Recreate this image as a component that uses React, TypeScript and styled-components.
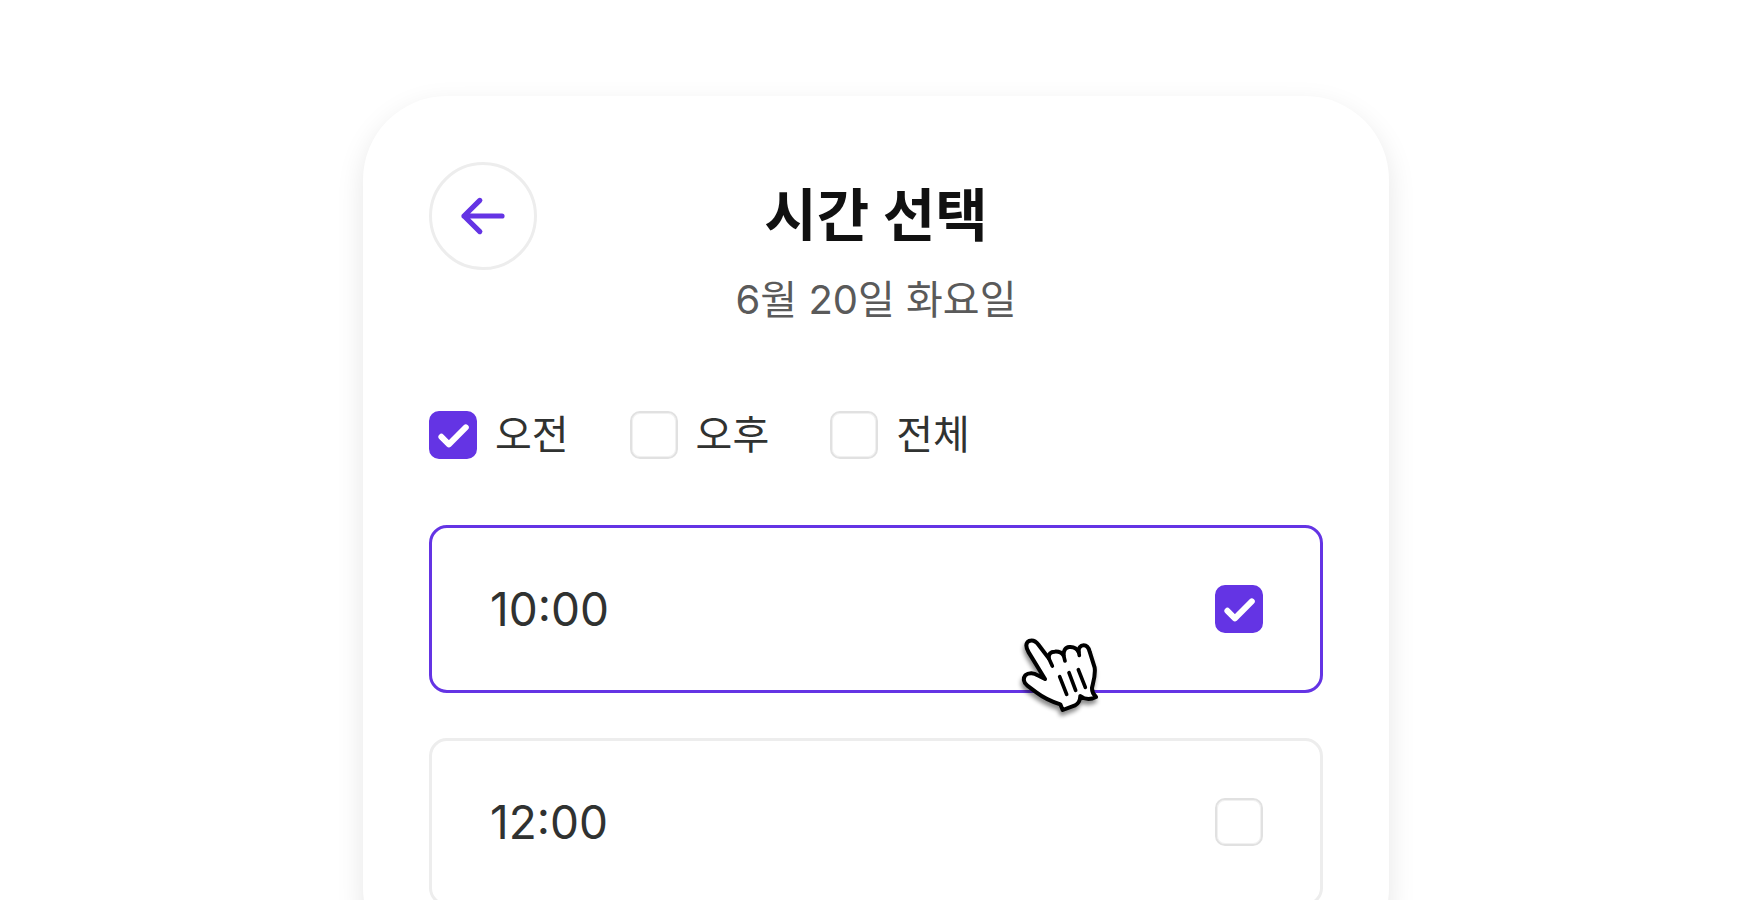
import React, { useState } from "react";
import styled, { createGlobalStyle } from "styled-components";

const color = {
  accent: "#6434e4",
  line: "#ededed",
  boxLine: "#e1e1e1",
  title: "#111111",
  text: "#303231",
  muted: "#5a5a5a",
};

const GlobalStyle = createGlobalStyle`
  *, *::before, *::after { box-sizing: border-box; }
  body {
    margin: 0;
    background: #ffffff;
    color: ${color.text};
    font-family: Inter, "Noto Sans CJK KR", sans-serif;
  }
`;

const Page = styled.main`
  display: flex;
  justify-content: center;
  align-items: flex-start;
  height: 100vh;
  padding: 96px 24px 0;
  overflow: hidden;
`;

const Card = styled.section`
  width: 100%;
  max-width: 1026px;
  padding: 66px;
  border-radius: 84px;
  background: #ffffff;
  box-shadow: 0 10px 28px rgba(0, 0, 0, 0.1);
`;

const Header = styled.header`
  display: grid;
  grid-template-columns: 108px 1fr 108px;
  align-items: center;
`;

const BackButton = styled.button`
  display: grid;
  place-items: center;
  width: 108px;
  height: 108px;
  padding: 0;
  border: 3px solid ${color.line};
  border-radius: 50%;
  background: #ffffff;
  color: ${color.accent};
  cursor: pointer;
`;

const Title = styled.h1`
  margin: 0;
  color: ${color.title};
  font-size: 57px;
  font-weight: 700;
  line-height: 84px;
  text-align: center;
`;

const DateText = styled.p`
  margin: 0;
  color: ${color.muted};
  font-size: 40px;
  line-height: 60px;
  text-align: center;
`;

const Filters = styled.div`
  display: flex;
  flex-wrap: wrap;
  gap: 61px;
  margin-top: 81px;
`;

const FilterLabel = styled.label`
  display: flex;
  align-items: center;
  gap: 18px;
  font-size: 40px;
  line-height: 48px;
  cursor: pointer;
`;

const Slots = styled.div`
  display: grid;
  gap: 45px;
  margin-top: 66px;
`;

const Slot = styled.label<{ $selected: boolean }>`
  position: relative;
  display: flex;
  align-items: center;
  justify-content: space-between;
  height: 168px;
  padding: 0 57px 0 58px;
  border: 3px solid ${(p) => (p.$selected ? color.accent : color.line)};
  border-radius: 18px;
  font-size: 46px;
  line-height: 60px;
  cursor: pointer;
`;

const CheckWrap = styled.span`
  display: grid;
  width: 48px;
  height: 48px;
  > * { grid-area: 1 / 1; }
`;

const CheckInput = styled.input`
  appearance: none;
  width: 48px;
  height: 48px;
  margin: 0;
  border: 2px solid ${color.boxLine};
  border-radius: 10px;
  background: #ffffff;
  box-shadow: inset 0 0 0 1px #f1f1f1;
  cursor: pointer;
  &:checked {
    border-color: ${color.accent};
    background: ${color.accent};
    box-shadow: none;
  }
`;

const CheckMark = styled.svg`
  z-index: 1;
  pointer-events: none;
`;

const Pointer = styled.svg`
  position: absolute;
  top: 92px;
  right: 200px;
  overflow: visible;
  pointer-events: none;
  filter: drop-shadow(-1px 4px 2px rgba(0, 0, 0, 0.45));
`;

type CheckProps = { checked: boolean; onChange: () => void };

function Check({ checked, onChange }: CheckProps) {
  return (
    <CheckWrap>
      <CheckInput type="checkbox" checked={checked} onChange={onChange} />
      {checked && (
        <CheckMark width="48" height="48" viewBox="0 0 48 48" fill="none" aria-hidden="true">
          <path d="M12.4 25.8 19.9 33.3 36.8 16.4" stroke="#fff" strokeWidth="6" strokeLinecap="round" strokeLinejoin="round" />
        </CheckMark>
      )}
    </CheckWrap>
  );
}

function HandPointer() {
  return (
    <Pointer width="120" height="110" viewBox="0 0 360 330" aria-hidden="true">
      <path
        d="M135 177 L86 97 C76 81 77 68 87 63 C98 59 108 64 116 75 L147 116 C144 102 153 95 164 95 C177 94 186 99 191 107 C190 92 196 82 208 81 C221 80 231 85 236 97 C235 83 241 76 251 76 C262 76 266 83 269 95 L284 143 C287 165 281 182 276 203 C275 217 281 224 288 231 C272 239 254 238 241 228 C240 244 236 251 225 256 L188 270 L181 253 C152 244 133 235 109 217 L82 197 C70 188 69 175 76 166 C86 157 103 159 113 166 Z"
        fill="#fff"
        stroke="#000"
        strokeWidth="12"
        strokeLinejoin="round"
      />
      <path
        d="M147 116 157 138M191 107 195 123M236 95 238 106M179 170 200 223M207 158 227 211M235 149 256 202"
        fill="none"
        stroke="#000"
        strokeWidth="11"
        strokeLinecap="round"
      />
    </Pointer>
  );
}

const filters = ["오전", "오후", "전체"];
const times = ["10:00", "12:00"];

export default function App() {
  const [filter, setFilter] = useState("오전");
  const [time, setTime] = useState("10:00");

  return (
    <>
      <GlobalStyle />
      <Page>
        <Card>
          <Header>
            <BackButton type="button" aria-label="뒤로">
              <svg width="48" height="48" viewBox="0 0 48 48" fill="none" aria-hidden="true">
                <path d="M43 24H5M20.8 8.4 5 24 20.8 39.6" stroke="currentColor" strokeWidth="5.2" strokeLinecap="round" strokeLinejoin="round" />
              </svg>
            </BackButton>
            <Title>시간 선택</Title>
          </Header>
          <DateText>6월 20일 화요일</DateText>
          <Filters>
            {filters.map((name) => (
              <FilterLabel key={name}>
                <Check checked={filter === name} onChange={() => setFilter(name)} />
                {name}
              </FilterLabel>
            ))}
          </Filters>
          <Slots>
            {times.map((value, index) => (
              <Slot key={value} $selected={time === value}>
                {value}
                <Check checked={time === value} onChange={() => setTime(value)} />
                {index === 0 && <HandPointer />}
              </Slot>
            ))}
          </Slots>
        </Card>
      </Page>
    </>
  );
}
